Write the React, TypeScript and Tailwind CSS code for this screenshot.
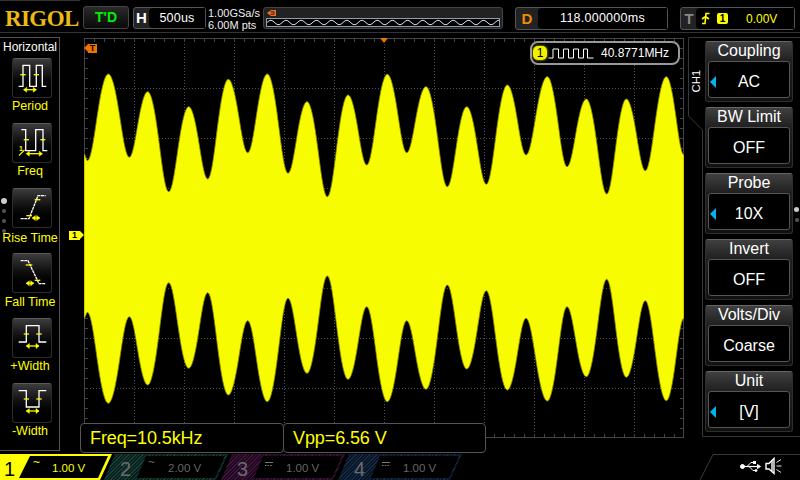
import React from "react";

const top: [number, number][] = [[84,154],[87.3,160.7],[108.3,74],[129.3,157.3],[147.7,91.7],[168.7,191.7],[188.7,106.7],[207.7,179],[228.3,79.3],[247.7,152.7],[267.3,74],[288,173.3],[307,101.7],[327.3,196.7],[348,95],[366.7,165],[387.3,74.3],[406.7,152.7],[426,86.7],[447.3,186.7],[466.7,106.7],[486.3,184.3],[507.3,85],[526,155],[547.3,76.7],[567,166.7],[586.3,99],[606.7,194],[626.3,99],[645.3,170.7],[666.3,76.7],[684,155]];
const bot: [number, number][] = [[84,318.3],[87.3,312.3],[108.3,403.3],[129.3,316.7],[147.7,385],[168.7,282.7],[188.7,368.3],[207.7,292.7],[228.3,395],[247.7,320.7],[267.3,401.7],[288,298.3],[307,373.3],[327.3,276],[348,379.3],[366.7,306.7],[387.3,401.7],[406.7,320.7],[426,389.3],[447.3,285],[466.7,369],[486.3,290.7],[507.3,390],[526,318.3],[547.3,401],[567,306.7],[586.3,376.7],[606.7,279.3],[626.3,377.3],[645.3,300.7],[666.3,400.7],[684,318.3]];

function envelope(pts: [number, number][], dir: number) {
  const out: string[] = [];
  for (let i = 0; i < pts.length - 1; i++) {
    const [x0, y0] = pts[i];
    const [x1, y1] = pts[i + 1];
    const n = Math.max(2, Math.round((x1 - x0) * 1.5));
    for (let k = 0; k < n; k++) {
      const t = k / n;
      const c = (1 - Math.cos(Math.PI * t)) / 2;
      const bias = dir * 0.06 * Math.abs(y1 - y0) * Math.sin(Math.PI * c);
      out.push(`${(x0 + (x1 - x0) * t - 84).toFixed(2)} ${(y0 + (y1 - y0) * c + bias - 38).toFixed(2)}`);
    }
  }
  const l = pts[pts.length - 1];
  out.push(`${l[0] - 84} ${l[1] - 38}`);
  return out;
}

function wavePath() {
  const t = envelope(top, -1);
  const b = envelope(bot, 1).reverse();
  return "M" + t.join("L") + "L" + b.join("L") + "Z";
}

function squiggle() {
  const p: string[] = [];
  for (let x = 0; x <= 232; x++) {
    p.push(`${x} ${(4.5 - 2.2 * Math.sin((x / 15.2) * 2 * Math.PI)).toFixed(2)}`);
  }
  return "M" + p.join("L");
}

function Scope() {
  const v = [50, 100, 150, 200, 250, 300, 350, 400, 450, 500, 550];
  const h = [50, 100, 150, 200, 250, 300, 350];
  const ticks = Array.from({ length: 61 }, (_, i) => i * 10);
  const vticks = Array.from({ length: 41 }, (_, i) => i * 10);
  return (
    <svg width="600" height="400" viewBox="0 0 600 400" className="block">
      {v.map((x) => (
        <line key={x} x1={x + 0.5} y1="0" x2={x + 0.5} y2="400" stroke="#505050" strokeDasharray="1 2" />
      ))}
      {h.map((y) => (
        <line key={y} x1="0" y1={y + 0.5} x2="600" y2={y + 0.5} stroke="#505050" strokeDasharray="1 2" />
      ))}
      <line x1="0.5" y1="0" x2="0.5" y2="400" stroke="#444" />
      <line x1="599.5" y1="0" x2="599.5" y2="400" stroke="#444" />
      <line x1="0" y1="0.5" x2="600" y2="0.5" stroke="#444" />
      <line x1="0" y1="399.5" x2="600" y2="399.5" stroke="#444" />
      {ticks.map((x) => (
        <g key={x}>
          <line x1={x + 0.5} y1="0" x2={x + 0.5} y2={4} stroke="#444" />
          <line x1={x + 0.5} y1="400" x2={x + 0.5} y2={396} stroke="#444" />
        </g>
      ))}
      {vticks.map((y) => (
        <g key={y}>
          <line x1="0" y1={y + 0.5} x2={4} y2={y + 0.5} stroke="#444" />
          <line x1="600" y1={y + 0.5} x2={596} y2={y + 0.5} stroke="#444" />
        </g>
      ))}
      <path d={wavePath()} fill="#f8fc00" stroke="#8a8c00" strokeWidth="0.8" />
    </svg>
  );
}

function Arrow({ x1, x2, y }: { x1: number; x2: number; y: number }) {
  return (
    <g stroke="#ffff00" strokeWidth="1.3" fill="#ffff00">
      <line x1={x1} x2={x2} y1={y} y2={y} />
      <path d={`M${x1} ${y}l3 -2.5v5z M${x2} ${y}l-3 -2.5v5z`} strokeWidth="0.5" />
    </g>
  );
}

function Tick({ x1, x2, y }: { x1: number; x2: number; y: number }) {
  return <line x1={x1} x2={x2} y1={y} y2={y} stroke="#ffff00" strokeWidth="1.3" />;
}

function Wave({ pts, dash }: { pts: string; dash?: boolean }) {
  return <polyline points={pts} fill="none" stroke="#fff" strokeWidth="1.3" strokeDasharray={dash ? "3 0.6" : undefined} />;
}

const icons: Record<string, React.ReactNode> = {
  Period: (
    <>
      <Wave pts="6.7,28.3 11,28.3 11,7.3 17.7,7.3 17.7,28.3 24.3,28.3 24.3,7.3 30.3,7.3 30.3,28.3 34.3,28.3" />
      <Tick x1={8.3} x2={13.7} y={16.7} />
      <Tick x1={21.7} x2={27} y={16.7} />
      <Arrow x1={11.7} x2={24.3} y={31.7} />
    </>
  ),
  Freq: (
    <>
      <Wave pts="9.3,6.7 13.7,6.7 13.7,27.7 23.7,27.7 23.7,6.7 31,6.7 31,27.7 35.3,27.7" />
      <Tick x1={11.7} x2={17} y={16.7} />
      <Tick x1={28.3} x2={33.3} y={16.7} />
      <Arrow x1={14.3} x2={30.3} y={30.7} />
      <text x="7" y="28" fontSize="7" fontWeight="700" fill="#ffff00" fontFamily="Liberation Sans, sans-serif">1</text>
      <line x1="7" y1="32.5" x2="12.5" y2="27" stroke="#ffff00" strokeWidth="1.1" />
    </>
  ),
  "Rise Time": (
    <>
      <Wave dash pts="8.7,30.7 17,30.7 26,7.7 33.7,7.7" />
      <Tick x1={22.7} x2={28.3} y={11.7} />
      <Tick x1={14.3} x2={20} y={27.7} />
      <Arrow x1={20.3} x2={27.7} y={30} />
    </>
  ),
  "Fall Time": (
    <>
      <Wave dash pts="8.7,7.7 16,7.7 27,30.7 33.7,30.7" />
      <Tick x1={13.7} x2={20.3} y={12} />
      <Tick x1={22.7} x2={28.3} y={27.3} />
      <Arrow x1={14.3} x2={21.7} y={30.3} />
    </>
  ),
  "+Width": (
    <>
      <Wave pts="6.7,24 14.3,24 14.3,7.7 27,7.7 27,24 34.3,24" />
      <Tick x1={11.7} x2={17} y={16} />
      <Tick x1={24.3} x2={29.7} y={16} />
      <Arrow x1={14.3} x2={27} y={28} />
    </>
  ),
  "-Width": (
    <>
      <Wave pts="6.7,7.7 14.3,7.7 14.3,24 27,24 27,7.7 34.3,7.7" />
      <Tick x1={11.7} x2={17} y={16} />
      <Tick x1={24.3} x2={29.7} y={16} />
      <Arrow x1={14.3} x2={27} y={28} />
    </>
  ),
};

function SoftKey({ label }: { label: string }) {
  const gap = label === "Rise Time" ? "mt-[3px]" : label === "Fall Time" ? "mt-[2px]" : "mt-[1px]";
  return (
    <div className="h-[65px] flex flex-col items-center">
      <div className="w-[40px] h-[40px] ml-[4px] shrink-0 rounded-[3px] border border-[#2c2c2c] border-t-[#5a5a5a] bg-gradient-to-b from-[#3c3c3c] via-[#0c0c0c] via-50% to-black">
        <svg width="38" height="38" viewBox="1 1 38 38" className="block">
          {icons[label]}
        </svg>
      </div>
      <div className={`text-[12.5px] leading-[14px] ml-[1px] text-[#ffff00] whitespace-nowrap ${gap}`}>{label}</div>
    </div>
  );
}

function Menu({ title, value, arrow }: { title: string; value: string; arrow?: boolean }) {
  return (
    <div className="h-[61px] w-[88px] rounded-[3px] border border-[#2e2e2e] border-t-[#666] bg-gradient-to-b from-[#404040] via-[#222] via-30% to-[#111] flex flex-col px-[2px] pb-[2px]">
      <div className="h-[19px] leading-[18px] text-center text-[16px] text-white whitespace-nowrap">{title}</div>
      <div className="relative h-[37px] rounded-[3px] border border-[#555] bg-black flex items-center justify-center pt-[5px] text-[16px] text-white">
        {arrow && (
          <span className="absolute left-[1px] top-[14px] w-0 h-0 border-y-[6px] border-y-transparent border-r-[6px] border-r-[#00b4f0]" />
        )}
        {value}
      </div>
    </div>
  );
}

function DcIcon() {
  return (
    <svg width="9" height="6" viewBox="0 0 9 6" className="block">
      <line x1="0" x2="8" y1="1.5" y2="1.5" stroke="#777" />
      <line x1="0" x2="8" y1="4.5" y2="4.5" stroke="#777" strokeDasharray="1.6 1" />
    </svg>
  );
}

export default function App() {
  return (
    <div className="w-[800px] h-[480px] bg-black overflow-hidden flex flex-col font-['Liberation_Sans',sans-serif] text-white">
      <div className="h-px w-[80px] bg-[#333]" />

      {/* top bar */}
      <div className="h-[32px] border-b border-[#333] flex pt-[5px]">
        <div className="w-[83px] pl-[5px] h-[26px] flex items-center font-['Liberation_Serif',serif] font-bold text-[23px] tracking-[-0.6px] text-[#ecba16]">
          RIGOL
        </div>
        <div className="w-[46px] h-[23px] rounded-[3px] border border-[#444] bg-gradient-to-b from-[#2a2a2a] to-[#0a0a0a] flex items-center justify-center text-[14px] font-bold text-[#00f000]">
          T'D
        </div>
        <div className="ml-[4px] mt-[1px] w-[73px] h-[22px] rounded-[3px] border border-[#555] bg-[#222] flex">
          <div className="w-[15px] text-center text-[15px] font-bold leading-[20px]">H</div>
          <div className="flex-1 rounded-l-[4px] bg-black text-center text-[12.5px] leading-[20px] tracking-[0.2px]">500us</div>
        </div>
        <div className="ml-[2px] w-[55px] text-[11px] leading-[11px] pt-[2px] text-[#eee] whitespace-nowrap">
          <div>1.00GSa/s</div>
          <div className="mt-[1px]">6.00M pts</div>
        </div>
        <div className="mt-[1px] w-[240px] h-[22px] rounded-[3px] border border-[#444] bg-[#222] flex flex-col px-[2px]">
          <svg width="12" height="9" viewBox="0 0 12 9" className="block mt-[1px] shrink-0">
            <path d="M1 4L5 1H10V7H5Z" fill="#f07020" />
            <path d="M4.5 2.8H8V5.2H4.5" fill="none" stroke="#222" />
          </svg>
          <div className="h-[9px] w-[234px] border border-[#8aa0b0] bg-black">
            <svg width="232" height="7" viewBox="0 1 232 7" className="block">
              <path d={squiggle()} fill="none" stroke="#ddd" strokeWidth="1" />
            </svg>
          </div>
        </div>
        <div className="ml-[12px] mt-[1px] w-[153px] h-[23px] rounded-[3px] border border-[#555] bg-[#222] flex">
          <div className="w-[22px] text-center text-[15px] font-bold leading-[21px] text-[#f08a00]">D</div>
          <div className="flex-1 rounded-l-[4px] bg-black text-center text-[12.5px] leading-[21px] tracking-[0.25px]">118.000000ms</div>
        </div>
        <div className="ml-[12px] mt-[1px] w-[115px] h-[23px] rounded-[3px] border border-[#555] bg-[#222] flex">
          <div className="w-[15px] pl-[1px] text-center text-[15px] font-bold leading-[21px] text-[#888]">T</div>
          <div className="flex-1 rounded-l-[4px] bg-black flex items-center text-[#ffff00]">
            <svg width="9" height="13" viewBox="0 0 9 13" className="ml-[5px] block">
              <path d="M1 11.5H4L5 1.5H8.5M1 7L4.5 4.5L8 7" fill="none" stroke="#ffff00" strokeWidth="1.6" />
            </svg>
            <div className="ml-[7px] w-[11px] h-[11px] rounded-[2px] bg-[#ffff00] text-black text-[10px] leading-[11px] text-center font-bold">1</div>
            <div className="ml-[18px] text-[12px] leading-[12px]">0.00V</div>
          </div>
        </div>
      </div>

      {/* middle */}
      <div className="h-[421px] flex">
        <div className="relative mt-[4px] w-[60px] h-[414px] border-t border-r border-b border-[#555] flex flex-col">
          <div className="h-[20px] text-[12px] leading-[16px] pl-[3px] pt-[1px] text-white whitespace-nowrap">Horizontal</div>
          <SoftKey label="Period" />
          <SoftKey label="Freq" />
          <SoftKey label="Rise Time" />
          <SoftKey label="Fall Time" />
          <SoftKey label="+Width" />
          <SoftKey label="-Width" />
          <span className="absolute left-[1px] top-[160px] w-[6px] h-[6px] rounded-full bg-[#ccc]" />
          <span className="absolute left-[2px] top-[171px] w-[4px] h-[4px] rounded-full bg-[#555]" />
          <span className="absolute left-[2px] top-[181px] w-[4px] h-[4px] rounded-full bg-[#555]" />
          <span className="absolute left-[2px] top-[191px] w-[4px] h-[4px] rounded-full bg-[#555]" />
        </div>

        <div className="relative ml-[24px] mt-[5px] w-[600px] h-[400px]">
          <Scope />
          {/* trigger position marker */}
          <div className="absolute left-0 top-[6px] h-[9px] w-[13px] flex">
            <span className="w-0 h-0 border-y-[4.5px] border-y-transparent border-r-[4px] border-r-[#f07000]" />
            <span className="w-[9px] h-[9px] bg-[#f07000] text-black text-[9px] leading-[9px] text-center font-bold">T</span>
          </div>
          <span className="absolute left-[296px] top-0 w-0 h-0 border-x-[4px] border-x-transparent border-t-[5px] border-t-[#f07000]" />
          {/* channel marker */}
          <div className="absolute left-[-15px] top-[193px] h-[9px] w-[15px] flex">
            <span className="w-[11px] h-[9px] bg-[#ffff00] text-black text-[9px] leading-[9px] text-center font-bold">1</span>
            <span className="w-0 h-0 border-y-[4.5px] border-y-transparent border-l-[4px] border-l-[#ffff00]" />
          </div>
          {/* frequency counter */}
          <div className="absolute left-[446px] top-[3px] w-[150px] h-[24px] rounded-[8px] border-2 border-[#999] bg-black flex items-center text-[12px]">
            <div className="ml-[1px] w-[14px] h-[14px] rounded-[5px] bg-[#f0f000] shadow-[0_0_3px_#cccc00] text-black text-[12px] leading-[14px] text-center">1</div>
            <svg width="46" height="11" viewBox="0 0 46 11" className="ml-[1px] block">
              <path d="M0.5 10H5V1H10.5V10H15.5V1H20.5V10H25.5V1H30.5V10H35.5V1H39.5V10H45.5" fill="none" stroke="#fff" strokeWidth="1" />
            </svg>
            <div className="ml-[7px] leading-[14px] whitespace-nowrap">40.8771MHz</div>
          </div>
          {/* measurements */}
          <div className="absolute left-[-4px] top-[385px] flex">
            <div className="w-[204px] h-[30px] rounded-[4px] border border-[#555] bg-black pl-[9px] text-[18px] leading-[28px] tracking-[-0.1px] text-[#ffff00]">Freq=10.5kHz</div>
            <div className="w-[203px] h-[30px] -ml-px rounded-[4px] border border-[#555] bg-black pl-[9px] text-[18px] leading-[28px] tracking-[-0.1px] text-[#ffff00]">Vpp=6.56 V</div>
          </div>
        </div>

        <div className="relative ml-[4px] mt-[4px] w-[112px] h-[400px] flex">
          <svg width="112" height="400" viewBox="0 0 112 400" className="absolute left-0 top-0">
            <path d="M112 0.5H0.5V79L14.5 93V399.5H112" fill="none" stroke="#383838" />
          </svg>
          <div className="relative w-[17px] pt-[33px] flex justify-center items-start">
            <div className="[writing-mode:vertical-rl] rotate-180 text-[11.5px] leading-[11px] tracking-[-0.2px] text-white">CH1</div>
          </div>
          <div className="relative pt-[4px] flex flex-col gap-[5px]">
            <Menu title="Coupling" value="AC" arrow />
            <Menu title="BW Limit" value="OFF" />
            <Menu title="Probe" value="10X" arrow />
            <Menu title="Invert" value="OFF" />
            <Menu title="Volts/Div" value="Coarse" />
            <Menu title="Unit" value="[V]" arrow />
          </div>
          <span className="absolute left-[106px] top-[170px] w-[5px] h-[5px] rounded-full bg-[#ccc]" />
          <span className="absolute left-[107px] top-[181px] w-[4px] h-[4px] rounded-full bg-[#555]" />
        </div>
      </div>

      {/* bottom bar */}
      <div className="h-[26px] flex">
        <div className="w-[112px] h-[26px] bg-[#ffff00] [clip-path:polygon(0_0,100%_0,100px_100%,0_100%)] flex">
          <div className="w-[19px] text-center text-black text-[20px] leading-[30px] font-medium">1</div>
          <div className="w-[89px] my-[2px] bg-black [clip-path:polygon(0_100%,11px_0,100%_0,79px_100%)] flex text-[#ffff00]">
            <div className="ml-[14px] text-[12px] leading-[13px]">~</div>
            <div className="ml-[12px] mt-[4px] text-[11.5px] leading-[16px] whitespace-nowrap">1.00 V</div>
          </div>
        </div>
        <div className="-ml-[8px] w-[124px] h-[26px] bg-[repeating-linear-gradient(135deg,#164038_0,#164038_1px,#0a1e1b_1px,#0a1e1b_2.5px)] [clip-path:polygon(0_100%,11px_0,100%_0,112px_100%)] flex">
          <div className="w-[33px] text-center text-[#6a6a6a] text-[20px] leading-[30px] pl-[10px]">2</div>
          <div className="w-[88px] my-[2px] bg-black [clip-path:polygon(0_100%,9px_0,100%_0,78px_100%)] flex text-[#666]">
            <div className="ml-[11px] text-[12px] leading-[13px]">~</div>
            <div className="ml-[13px] mt-[4px] text-[11.5px] leading-[16px] whitespace-nowrap">2.00 V</div>
          </div>
        </div>
        <div className="-ml-[7px] w-[124px] h-[26px] bg-[repeating-linear-gradient(135deg,#40143f_0,#40143f_1px,#1c0a1c_1px,#1c0a1c_2.5px)] [clip-path:polygon(0_100%,11px_0,100%_0,112px_100%)] flex">
          <div className="w-[33px] text-center text-[#6a6a6a] text-[20px] leading-[30px] pl-[10px]">3</div>
          <div className="w-[88px] my-[2px] bg-black [clip-path:polygon(0_100%,9px_0,100%_0,78px_100%)] flex text-[#666]">
            <div className="ml-[11px] mt-[5px]"><DcIcon /></div>
            <div className="ml-[12px] mt-[4px] text-[11.5px] leading-[16px] whitespace-nowrap">1.00 V</div>
          </div>
        </div>
        <div className="-ml-[7px] w-[124px] h-[26px] bg-[repeating-linear-gradient(135deg,#142c4c_0,#142c4c_1px,#0a1420_1px,#0a1420_2.5px)] [clip-path:polygon(0_100%,11px_0,100%_0,112px_100%)] flex">
          <div className="w-[33px] text-center text-[#6a6a6a] text-[20px] leading-[30px] pl-[10px]">4</div>
          <div className="w-[88px] my-[2px] bg-black [clip-path:polygon(0_100%,9px_0,100%_0,78px_100%)] flex text-[#666]">
            <div className="ml-[11px] mt-[5px]"><DcIcon /></div>
            <div className="ml-[12px] mt-[4px] text-[11.5px] leading-[16px] whitespace-nowrap">1.00 V</div>
          </div>
        </div>
        <svg width="100" height="26" viewBox="0 0 100 26" className="ml-auto block">
          <path d="M0 26L13 0.5H100" fill="none" stroke="#3a3a3a" />
          <g stroke="#fff" fill="#fff" strokeWidth="1">
            <path d="M42 12.5H59" fill="none" strokeWidth="1.2" />
            <circle cx="42.5" cy="12.5" r="2" />
            <path d="M47 12.5L51 8.5H54" fill="none" />
            <path d="M49 12.5L53 16.5H55" fill="none" />
            <rect x="53.5" y="7.5" width="2" height="2" />
            <circle cx="56" cy="16.5" r="1" />
            <path d="M57.5 10.5L60.5 12.5L57.5 14.5Z" />
            <path d="M66 9.5H69L74 4.5V19.5L69 15H66Z" fill="none" strokeWidth="1.4" />
            <path d="M72 7V17" strokeWidth="1.4" />
            <path d="M76.5 8.5L81 5.5M76.5 12H81.5M76.5 15.5L81 18.5" fill="none" strokeWidth="0.9" />
          </g>
        </svg>
      </div>
    </div>
  );
}
